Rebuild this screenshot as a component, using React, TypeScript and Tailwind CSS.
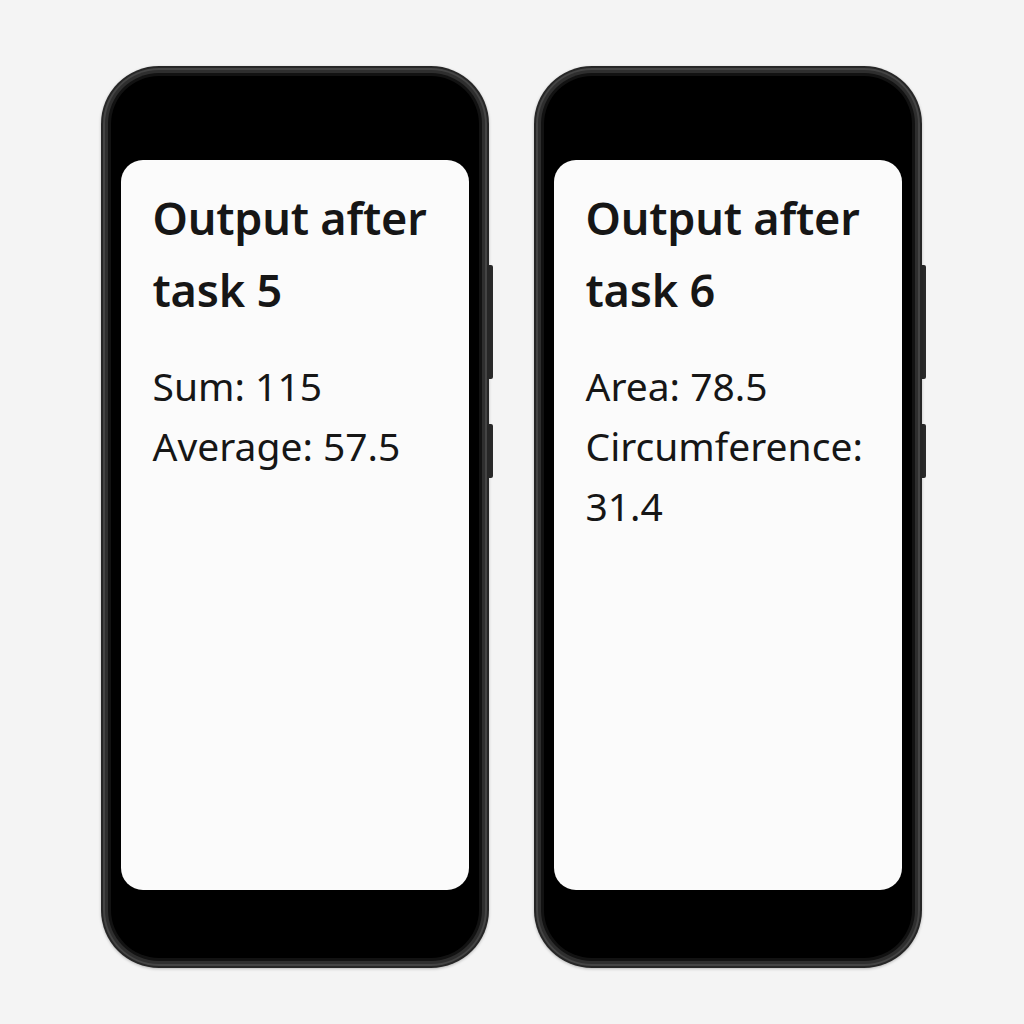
import React from "react";

function Phone({ title, lines }: { title: string[]; lines: string[] }) {
  return (
    <div className="relative w-[388px] h-[902px]">
      <div className="absolute right-[-4px] top-[199px] w-[5px] h-[114px] rounded-r-[2px] bg-[#2a2a2a]" />
      <div className="absolute right-[-4px] top-[358px] w-[5px] h-[54px] rounded-r-[2px] bg-[#2a2a2a]" />
      <div className="relative h-full w-full rounded-[58px] bg-[#262626] p-[2px] shadow-[0_1px_3px_rgba(0,0,0,0.25)]">
        <div className="h-full w-full rounded-[56px] bg-[#444] p-[2px]">
          <div className="h-full w-full rounded-[54px] bg-[#2e2e2e] p-[3px]">
            <div className="h-full w-full rounded-[51px] bg-[#121212] p-[3px]">
              <div className="flex h-full w-full flex-col rounded-[48px] bg-black px-[10px] pt-[84px] pb-[68px]">
                <div className="flex-1 rounded-[22px] bg-[#fbfbfb] px-[32px] pt-[22px] text-[#161616]" style={{ fontFamily: "'Noto Sans', 'DejaVu Sans', sans-serif" }}>
                  <div className="text-[45px] font-semibold leading-[72px] tracking-[-0.2px]">
                    {title.map((t) => (
                      <div key={t}>{t}</div>
                    ))}
                  </div>
                  <div className="mt-[30px] text-[39px] font-normal leading-[60px]">
                    {lines.map((t) => (
                      <div key={t}>{t}</div>
                    ))}
                  </div>
                </div>
              </div>
            </div>
          </div>
        </div>
      </div>
    </div>
  );
}

export default function App() {
  return (
    <div className="flex h-[1024px] w-[1024px] items-start justify-center gap-[45px] bg-[#f4f4f4] pt-[66px] pr-[2px]">
      <Phone title={["Output after", "task 5"]} lines={["Sum: 115", "Average: 57.5"]} />
      <Phone title={["Output after", "task 6"]} lines={["Area: 78.5", "Circumference:", "31.4"]} />
    </div>
  );
}
